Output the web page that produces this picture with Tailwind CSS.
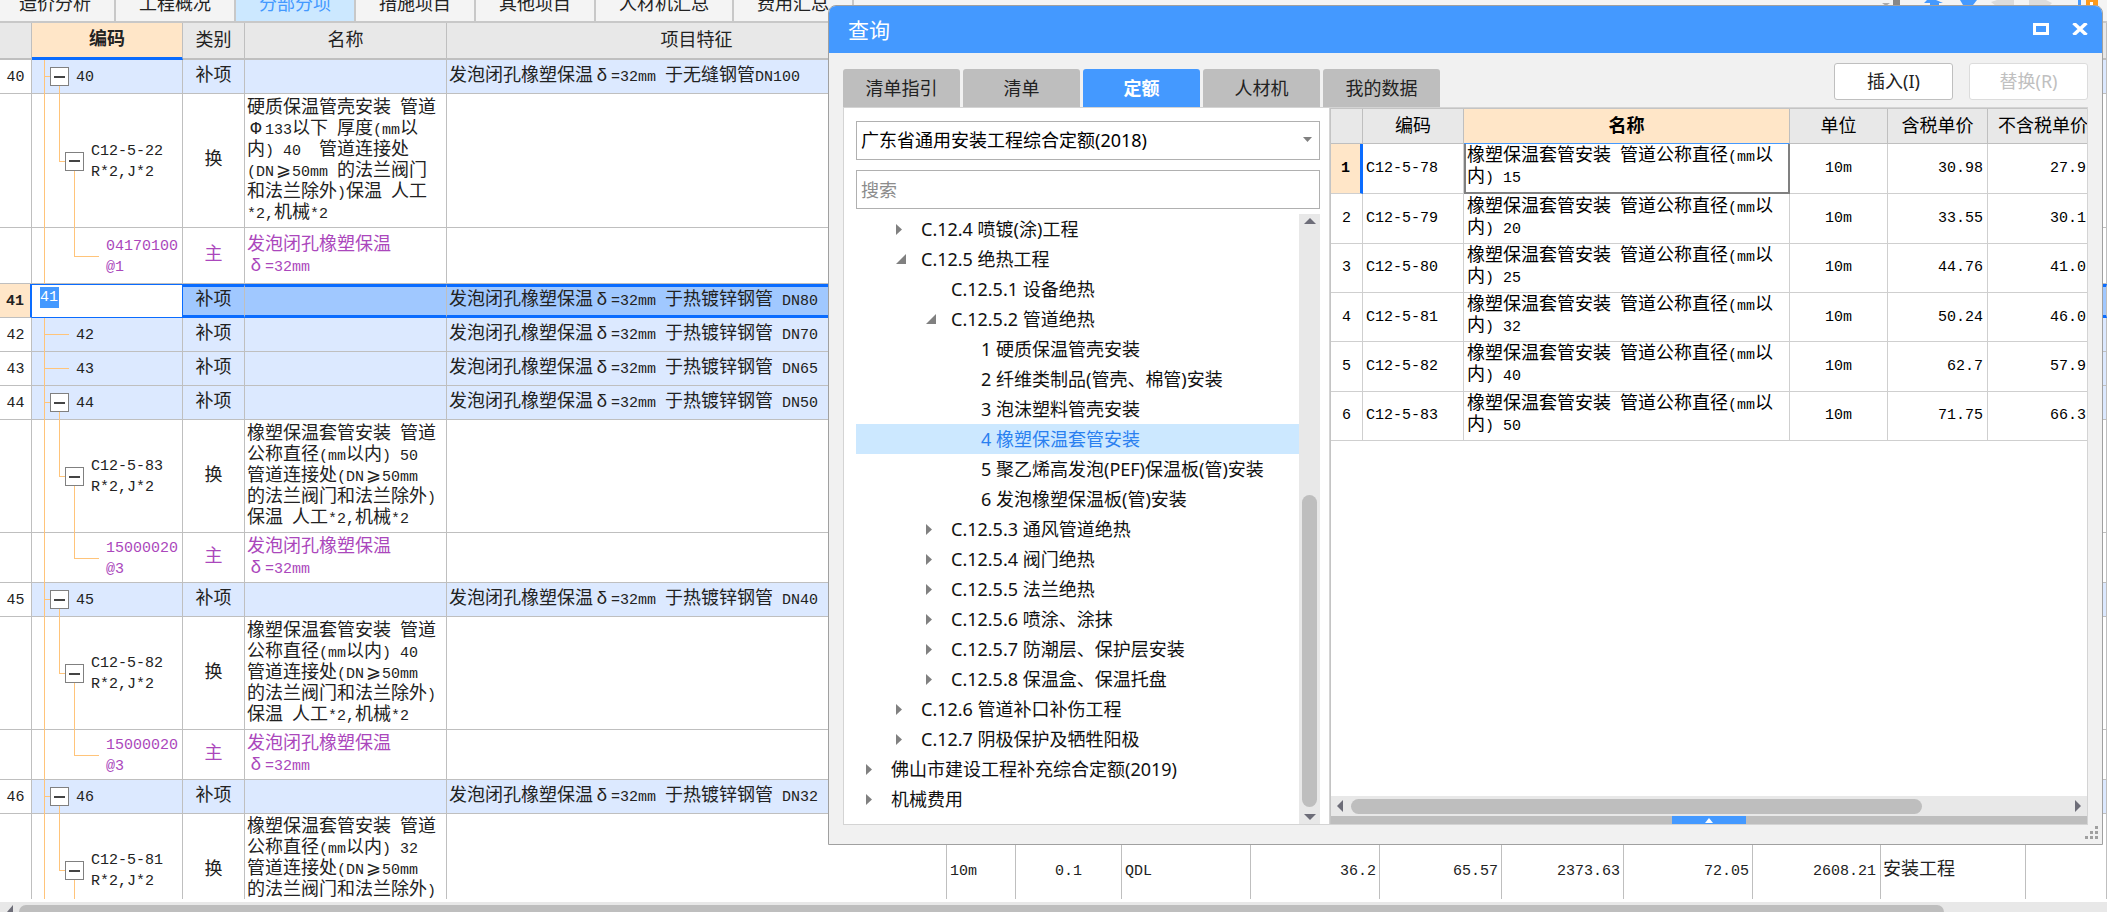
<!DOCTYPE html>
<html lang="zh-CN">
<head>
<meta charset="utf-8">
<title>分部分项</title>
<script src="https://cdn.jsdelivr.net/npm/@tailwindcss/browser@4"></script>
</head>
<body class="relative flex h-screen flex-col overflow-hidden bg-white text-[18px] text-[#222] font-['Noto_Sans','Noto_Sans_CJK_SC',sans-serif]">

<!-- Page tabs and toolbar -->
<header class="flex h-[23px] shrink-0 items-end overflow-hidden border-b-2 border-[#c8c8c8] bg-[#f4f4f4]">
  <nav class="flex [&_button]:h-[35px] [&_button]:w-[120px] [&_button]:shrink-0 [&_button]:border-r-2 [&_button]:border-[#c8c8c8] [&_button]:leading-[35px]">
    <div class="w-[116px] shrink-0 overflow-hidden"><button class="-ml-[4px]">造价分析</button></div>
    <button>工程概况</button>
    <button class="bg-[#cce8ff] text-[#4499ff]">分部分项</button>
    <button>措施项目</button>
    <button>其他项目</button>
    <div class="w-[138px] shrink-0 border-r-2 border-[#c8c8c8] text-center leading-[35px]"><button class="border-none">人材机汇总</button></div>
    <button>费用汇总</button>
  </nav>
  <svg class="mb-[14px] ml-auto mr-[6px] h-[7px] w-[222px] shrink-0" viewBox="0 0 222 7" aria-hidden="true">
    <path d="M3 3h8l-4 3z" fill="#aaa"/><path d="M14 0h7v7h-7z" fill="#888"/>
    <path d="M48 0h9l7 3h-4v4h-9V3h-6z" fill="#4499ff"/><path d="M81 0h17l-4 5-4 2h-2l-4-2z" fill="#4499ff"/>
    <path d="M112 2l6-2h17v6h-18z" fill="#dcdcdc"/><path d="M150 0h17l6 3-3 3h-20z" fill="#dcdcdc"/>
    <path d="M199 0h3v7h-3z" fill="#4499ff"/><path d="M207 0h12v7h-12z" fill="#ff9a1a"/><path d="M211 2h3v3h-3z" fill="#fff"/>
  </svg>
</header>

<!-- Bill of quantities -->
<main class="min-h-0 flex-1 overflow-hidden border-b-3 border-white">
<table class="w-full table-fixed border-separate border-spacing-0 whitespace-pre font-['Liberation_Mono','Noto_Sans_CJK_SC',monospace] text-[15px] leading-[21px]
  [&_td]:relative [&_td]:border-b [&_td]:border-r [&_td]:border-[#bfbfbf] [&_td]:p-0 [&_td]:pt-[2px]
  [&_th]:h-[37px] [&_th]:border-b-2 [&_th]:border-r [&_th]:border-[#bfbfbf] [&_th]:bg-[#e8e8e8] [&_th]:p-0 [&_th]:pt-[3px] [&_th]:font-normal
  [&_span]:text-[18px] [&_span]:leading-none
  [&_i]:absolute [&_i]:bg-[#ffc47a]
  [&_button]:absolute [&_button]:flex [&_button]:size-[19px] [&_button]:items-center [&_button]:justify-center [&_button]:border [&_button]:border-[#808080] [&_button]:bg-white">
  <colgroup><col class="w-[32px]"><col class="w-[151px]"><col class="w-[62px]"><col class="w-[202px]"><col class="w-[500px]"><col class="w-[69px]"><col class="w-[106px]"><col class="w-[129px]"><col class="w-[129px]"><col class="w-[122px]"><col class="w-[122px]"><col class="w-[129px]"><col class="w-[128px]"><col class="w-[145px]"><col></colgroup>
  <thead>
    <tr><th></th><th class="border-b-3! border-b-[#0a6cff]! bg-[#ffe6c8]! font-bold!"><span>编码</span></th><th><span>类别</span></th><th><span>名称</span></th><th><span>项目特征</span></th><th></th><th></th><th></th><th></th><th></th><th></th><th></th><th></th><th></th><th></th></tr>
  </thead>
  <tbody>
    <tr class="h-[34px] bg-[#dce9ff]">
      <td class="bg-white text-center">40</td>
      <td class="pl-[44px]!"><i class="left-[12px] top-0 -bottom-px w-px"></i><i class="left-[12px] top-[16px] h-px w-[6px]"></i><i class="left-[27px] top-[16px] -bottom-px w-px"></i><button class="left-[18px] top-[7px]" aria-label="折叠 40"><svg width="11" height="2"><path d="M0 0h11v2H0z" fill="#444"/></svg></button>40</td>
      <td class="text-center"><span>补项</span></td><td></td>
      <td class="pl-[2px]!"><span>发泡闭孔橡塑保温</span><span class="inline-block w-[18px] text-center">δ</span>=32mm <span>于无缝钢管</span>DN100</td>
      <td colspan="10"></td>
    </tr>
    <tr class="h-[134px]">
      <td></td>
      <td class="pl-[59px]!"><i class="left-[12px] top-0 -bottom-px w-px"></i><i class="left-[27px] top-0 h-1/2 w-px"></i><i class="left-[27px] top-1/2 h-px w-[6px]"></i><i class="left-[42px] top-1/2 -bottom-px w-px"></i><button class="left-[33px] top-[calc(50%-9px)]" aria-label="折叠 C12-5-22"><svg width="11" height="2"><path d="M0 0h11v2H0z" fill="#444"/></svg></button>C12-5-22<br>R*2,J*2</td>
      <td class="text-center"><span>换</span></td>
      <td class="pl-[2px]!"><span>硬质保温管壳安装</span> <span>管道</span><br><span class="inline-block w-[18px] text-center">Φ</span>133<span>以下</span> <span>厚度</span>(mm<span>以</span><br><span>内</span>) 40  <span>管道连接处</span><br>(DN<span class="inline-block w-[18px] text-center">⩾</span>50mm <span>的法兰阀门</span><br><span>和法兰除外</span>)<span>保温</span> <span>人工</span><br>*2,<span>机械</span>*2</td>
      <td></td><td colspan="10"></td>
    </tr>
    <tr class="h-[56px] text-[#ab47bc]">
      <td></td>
      <td class="pl-[74px]!"><i class="left-[12px] top-0 -bottom-px w-px"></i><i class="left-[42px] top-0 h-1/2 w-px"></i><i class="left-[42px] top-1/2 h-px w-[25px]"></i>04170100<br>@1</td>
      <td class="text-center"><span>主</span></td>
      <td class="pl-[2px]!"><span>发泡闭孔橡塑保温</span><br><span class="inline-block w-[18px] text-center">δ</span>=32mm</td>
      <td></td><td colspan="10"></td>
    </tr>
    <tr class="h-[34px] bg-[#a0c8ff]">
      <td class="border-r-2! border-r-[#0a6cff]! bg-[#ffe6c8] text-center font-bold">41</td>
      <td class="border-t! border-[#0a6cff]! bg-white pl-[8px]! align-top"><input aria-label="编码" value="41" class="block h-[21px] w-[19px] bg-[#4499ff] text-white outline-none"></td>
      <td class="border-y-3! border-y-[#0a6cff]! pt-0! text-center"><span>补项</span></td><td class="border-y-3! border-y-[#0a6cff]!"></td>
      <td class="border-y-3! border-y-[#0a6cff]! pt-0! pl-[2px]!"><span>发泡闭孔橡塑保温</span><span class="inline-block w-[18px] text-center">δ</span>=32mm <span>于热镀锌钢管</span> DN80</td>
      <td colspan="10" class="border-y-3! border-y-[#0a6cff]!"></td>
    </tr>
    <tr class="h-[34px] bg-[#dce9ff]">
      <td class="bg-white text-center">42</td>
      <td class="pl-[44px]!"><i class="left-[12px] top-0 -bottom-px w-px"></i><i class="left-[12px] top-[16px] h-px w-[25px]"></i>42</td>
      <td class="text-center"><span>补项</span></td><td></td>
      <td class="pl-[2px]!"><span>发泡闭孔橡塑保温</span><span class="inline-block w-[18px] text-center">δ</span>=32mm <span>于热镀锌钢管</span> DN70</td>
      <td colspan="10"></td>
    </tr>
    <tr class="h-[34px] bg-[#dce9ff]">
      <td class="bg-white text-center">43</td>
      <td class="pl-[44px]!"><i class="left-[12px] top-0 -bottom-px w-px"></i><i class="left-[12px] top-[16px] h-px w-[25px]"></i>43</td>
      <td class="text-center"><span>补项</span></td><td></td>
      <td class="pl-[2px]!"><span>发泡闭孔橡塑保温</span><span class="inline-block w-[18px] text-center">δ</span>=32mm <span>于热镀锌钢管</span> DN65</td>
      <td colspan="10"></td>
    </tr>
    <tr class="h-[34px] bg-[#dce9ff]">
      <td class="bg-white text-center">44</td>
      <td class="pl-[44px]!"><i class="left-[12px] top-0 -bottom-px w-px"></i><i class="left-[12px] top-[16px] h-px w-[6px]"></i><i class="left-[27px] top-[16px] -bottom-px w-px"></i><button class="left-[18px] top-[7px]" aria-label="折叠 44"><svg width="11" height="2"><path d="M0 0h11v2H0z" fill="#444"/></svg></button>44</td>
      <td class="text-center"><span>补项</span></td><td></td>
      <td class="pl-[2px]!"><span>发泡闭孔橡塑保温</span><span class="inline-block w-[18px] text-center">δ</span>=32mm <span>于热镀锌钢管</span> DN50</td>
      <td colspan="10"></td>
    </tr>
    <tr class="h-[113px]">
      <td></td>
      <td class="pl-[59px]!"><i class="left-[12px] top-0 -bottom-px w-px"></i><i class="left-[27px] top-0 h-1/2 w-px"></i><i class="left-[27px] top-1/2 h-px w-[6px]"></i><i class="left-[42px] top-1/2 -bottom-px w-px"></i><button class="left-[33px] top-[calc(50%-9px)]" aria-label="折叠 C12-5-83"><svg width="11" height="2"><path d="M0 0h11v2H0z" fill="#444"/></svg></button>C12-5-83<br>R*2,J*2</td>
      <td class="text-center"><span>换</span></td>
      <td class="pl-[2px]!"><span>橡塑保温套管安装</span> <span>管道</span><br><span>公称直径</span>(mm<span>以内</span>) 50<br><span>管道连接处</span>(DN<span class="inline-block w-[18px] text-center">⩾</span>50mm<br><span>的法兰阀门和法兰除外</span>)<br><span>保温</span> <span>人工</span>*2,<span>机械</span>*2</td>
      <td></td><td colspan="10"></td>
    </tr>
    <tr class="h-[50px] text-[#ab47bc]">
      <td></td>
      <td class="pl-[74px]!"><i class="left-[12px] top-0 -bottom-px w-px"></i><i class="left-[42px] top-0 h-1/2 w-px"></i><i class="left-[42px] top-1/2 h-px w-[25px]"></i>15000020<br>@3</td>
      <td class="text-center"><span>主</span></td>
      <td class="pl-[2px]!"><span>发泡闭孔橡塑保温</span><br><span class="inline-block w-[18px] text-center">δ</span>=32mm</td>
      <td></td><td colspan="10"></td>
    </tr>
    <tr class="h-[34px] bg-[#dce9ff]">
      <td class="bg-white text-center">45</td>
      <td class="pl-[44px]!"><i class="left-[12px] top-0 -bottom-px w-px"></i><i class="left-[12px] top-[16px] h-px w-[6px]"></i><i class="left-[27px] top-[16px] -bottom-px w-px"></i><button class="left-[18px] top-[7px]" aria-label="折叠 45"><svg width="11" height="2"><path d="M0 0h11v2H0z" fill="#444"/></svg></button>45</td>
      <td class="text-center"><span>补项</span></td><td></td>
      <td class="pl-[2px]!"><span>发泡闭孔橡塑保温</span><span class="inline-block w-[18px] text-center">δ</span>=32mm <span>于热镀锌钢管</span> DN40</td>
      <td colspan="10"></td>
    </tr>
    <tr class="h-[113px]">
      <td></td>
      <td class="pl-[59px]!"><i class="left-[12px] top-0 -bottom-px w-px"></i><i class="left-[27px] top-0 h-1/2 w-px"></i><i class="left-[27px] top-1/2 h-px w-[6px]"></i><i class="left-[42px] top-1/2 -bottom-px w-px"></i><button class="left-[33px] top-[calc(50%-9px)]" aria-label="折叠 C12-5-82"><svg width="11" height="2"><path d="M0 0h11v2H0z" fill="#444"/></svg></button>C12-5-82<br>R*2,J*2</td>
      <td class="text-center"><span>换</span></td>
      <td class="pl-[2px]!"><span>橡塑保温套管安装</span> <span>管道</span><br><span>公称直径</span>(mm<span>以内</span>) 40<br><span>管道连接处</span>(DN<span class="inline-block w-[18px] text-center">⩾</span>50mm<br><span>的法兰阀门和法兰除外</span>)<br><span>保温</span> <span>人工</span>*2,<span>机械</span>*2</td>
      <td></td><td colspan="10"></td>
    </tr>
    <tr class="h-[50px] text-[#ab47bc]">
      <td></td>
      <td class="pl-[74px]!"><i class="left-[12px] top-0 -bottom-px w-px"></i><i class="left-[42px] top-0 h-1/2 w-px"></i><i class="left-[42px] top-1/2 h-px w-[25px]"></i>15000020<br>@3</td>
      <td class="text-center"><span>主</span></td>
      <td class="pl-[2px]!"><span>发泡闭孔橡塑保温</span><br><span class="inline-block w-[18px] text-center">δ</span>=32mm</td>
      <td></td><td colspan="10"></td>
    </tr>
    <tr class="h-[34px] bg-[#dce9ff]">
      <td class="bg-white text-center">46</td>
      <td class="pl-[44px]!"><i class="left-[12px] top-0 -bottom-px w-px"></i><i class="left-[12px] top-[16px] h-px w-[6px]"></i><i class="left-[27px] top-[16px] -bottom-px w-px"></i><button class="left-[18px] top-[7px]" aria-label="折叠 46"><svg width="11" height="2"><path d="M0 0h11v2H0z" fill="#444"/></svg></button>46</td>
      <td class="text-center"><span>补项</span></td><td></td>
      <td class="pl-[2px]!"><span>发泡闭孔橡塑保温</span><span class="inline-block w-[18px] text-center">δ</span>=32mm <span>于热镀锌钢管</span> DN32</td>
      <td colspan="10"></td>
    </tr>
    <tr class="h-[113px]">
      <td></td>
      <td class="pl-[59px]!"><i class="left-[12px] top-0 -bottom-px w-px"></i><i class="left-[27px] top-0 h-1/2 w-px"></i><i class="left-[27px] top-1/2 h-px w-[6px]"></i><i class="left-[42px] top-1/2 -bottom-px w-px"></i><button class="left-[33px] top-[calc(50%-9px)]" aria-label="折叠 C12-5-81"><svg width="11" height="2"><path d="M0 0h11v2H0z" fill="#444"/></svg></button>C12-5-81<br>R*2,J*2</td>
      <td class="text-center"><span>换</span></td>
      <td class="pt-[4px]! pl-[2px]! align-top"><span>橡塑保温套管安装</span> <span>管道</span><br><span>公称直径</span>(mm<span>以内</span>) 32<br><span>管道连接处</span>(DN<span class="inline-block w-[18px] text-center">⩾</span>50mm<br><span>的法兰阀门和法兰除外</span>)</td>
      <td></td>
      <td class="pl-[3px]!">10m</td><td class="text-center">0.1</td><td class="pl-[3px]!">QDL</td><td class="pr-[3px]! text-right">36.2</td><td class="pr-[3px]! text-right">65.57</td><td class="pr-[3px]! text-right">2373.63</td><td class="pr-[3px]! text-right">72.05</td><td class="pr-[4px]! text-right">2608.21</td><td class="pl-[2px]!"><span>安装工程</span></td><td></td>
    </tr>
  </tbody>
</table>
</main>
<footer class="flex h-[10px] shrink-0 items-end bg-[#e8e8e8]">
  <svg class="ml-[7px] mr-[6px] shrink-0" width="6" height="7" aria-hidden="true"><path d="M6 0v7H0z" fill="#6d6d78"/></svg>
  <div class="h-[7px] flex-1 rounded-t-[7px] bg-[#bebebe]"></div>
  <div class="w-[163px] shrink-0"></div>
</footer>

<!-- Query window -->
<section role="dialog" aria-labelledby="dlg" class="absolute bottom-[67px] left-[828px] right-[4px] top-[5px] flex flex-col rounded-t-[8px] border border-[#a0a0a0] bg-[#f1f1f1]">
  <header class="flex h-[47px] shrink-0 items-center rounded-t-[7px] bg-[#4499ff] pl-[19px] pr-[14px] text-white">
    <h1 id="dlg" class="flex-1 pt-[3px] text-[21px]">查询</h1>
    <button aria-label="最大化" class="mr-[23px] mb-[2px]"><svg width="16" height="12"><path d="M0 0h16v12H0zM3 3v6h10V3z" fill="#fff" fill-rule="evenodd"/></svg></button>
    <button aria-label="关闭" class="mb-[2px]"><svg width="16" height="12"><path d="M1.500 0L14.500 12M14.500 0L1.500 12" stroke="#fff" stroke-width="3.500"/></svg></button>
  </header>

  <div class="flex min-h-0 flex-1 flex-col pl-[14px] pr-[14px]">
    <div class="flex h-[54px] shrink-0 items-end">
      <div role="tablist" class="flex flex-1 gap-[3px] [&_button]:h-[38px] [&_button]:w-[117px] [&_button]:rounded-t-[3px] [&_button]:bg-[#bebebe]">
        <button role="tab">清单指引</button>
        <button role="tab">清单</button>
        <button role="tab" aria-selected="true" class="bg-[#4499ff]! font-bold text-white">定额</button>
        <button role="tab">人材机</button>
        <button role="tab">我的数据</button>
      </div>
      <div class="mb-[7px] flex gap-[16px]">
        <button class="h-[37px] w-[119px] rounded-[3px] border border-[#bfbfbf] bg-white">插入(I)</button>
        <button disabled class="h-[37px] w-[119px] rounded-[3px] border border-[#dcdcdc] bg-white text-[#c0c0c0]">替换(R)</button>
      </div>
    </div>

    <div class="flex min-h-0 flex-1 border border-[#d4d4d4] bg-white">
      <!-- Quota library and chapter tree -->
      <div class="flex w-[486px] shrink-0 flex-col border-r border-[#d4d4d4] pl-[12px] pr-[9px] pt-[13px]">
        <div class="relative">
          <select aria-label="定额库" class="h-[39px] w-full appearance-none border border-[#b0b0b0] bg-white pl-[4px] text-black"><option>广东省通用安装工程综合定额(2018)</option></select>
          <svg class="absolute right-[8px] top-[16px]" width="9" height="5" aria-hidden="true"><path d="M0 0h9L4.500 5z" fill="#808080"/></svg>
        </div>
        <input aria-label="搜索" placeholder="搜索" class="mt-[10px] h-[39px] w-full border border-[#b0b0b0] pl-[4px] outline-none placeholder:text-[#8c8c8c]">
        <div class="mt-[5px] flex min-h-0 flex-1">
          <ul role="tree" class="flex-1 overflow-hidden whitespace-nowrap text-[#111] [&_li]:flex [&_li]:h-[30px] [&_li]:items-center [&_svg]:mr-[19px] [&_svg]:shrink-0 [&_svg]:fill-[#808080]">
            <li role="treeitem" class="pl-[40px]"><svg width="6" height="11"><path d="M0 0l6 5.500L0 11z"/></svg>C.12.4 喷镀(涂)工程</li>
            <li role="treeitem" class="pl-[40px]"><svg class="mr-[15px]!" width="10" height="10"><path d="M10 0v10H0z"/></svg>C.12.5 绝热工程</li>
            <li role="treeitem" class="pl-[95px]">C.12.5.1 设备绝热</li>
            <li role="treeitem" class="pl-[70px]"><svg class="mr-[15px]!" width="10" height="10"><path d="M10 0v10H0z"/></svg>C.12.5.2 管道绝热</li>
            <li role="treeitem" class="pl-[125px]">1 硬质保温管壳安装</li>
            <li role="treeitem" class="pl-[125px]">2 纤维类制品(管壳、棉管)安装</li>
            <li role="treeitem" class="pl-[125px]">3 泡沫塑料管壳安装</li>
            <li role="treeitem" aria-selected="true" class="bg-[#cce8ff] pl-[125px] text-[#2a80f0]">4 橡塑保温套管安装</li>
            <li role="treeitem" class="pl-[125px]">5 聚乙烯高发泡(PEF)保温板(管)安装</li>
            <li role="treeitem" class="pl-[125px]">6 发泡橡塑保温板(管)安装</li>
            <li role="treeitem" class="pl-[70px]"><svg width="6" height="11"><path d="M0 0l6 5.500L0 11z"/></svg>C.12.5.3 通风管道绝热</li>
            <li role="treeitem" class="pl-[70px]"><svg width="6" height="11"><path d="M0 0l6 5.500L0 11z"/></svg>C.12.5.4 阀门绝热</li>
            <li role="treeitem" class="pl-[70px]"><svg width="6" height="11"><path d="M0 0l6 5.500L0 11z"/></svg>C.12.5.5 法兰绝热</li>
            <li role="treeitem" class="pl-[70px]"><svg width="6" height="11"><path d="M0 0l6 5.500L0 11z"/></svg>C.12.5.6 喷涂、涂抹</li>
            <li role="treeitem" class="pl-[70px]"><svg width="6" height="11"><path d="M0 0l6 5.500L0 11z"/></svg>C.12.5.7 防潮层、保护层安装</li>
            <li role="treeitem" class="pl-[70px]"><svg width="6" height="11"><path d="M0 0l6 5.500L0 11z"/></svg>C.12.5.8 保温盒、保温托盘</li>
            <li role="treeitem" class="pl-[40px]"><svg width="6" height="11"><path d="M0 0l6 5.500L0 11z"/></svg>C.12.6 管道补口补伤工程</li>
            <li role="treeitem" class="pl-[40px]"><svg width="6" height="11"><path d="M0 0l6 5.500L0 11z"/></svg>C.12.7 阴极保护及牺牲阳极</li>
            <li role="treeitem" class="pl-[10px]"><svg width="6" height="11"><path d="M0 0l6 5.500L0 11z"/></svg>佛山市建设工程补充综合定额(2019)</li>
            <li role="treeitem" class="pl-[10px]"><svg width="6" height="11"><path d="M0 0l6 5.500L0 11z"/></svg>机械费用</li>
          </ul>
          <div class="flex w-[21px] shrink-0 flex-col items-center bg-[#e8e8e8] py-[4px]">
            <svg width="12" height="6" aria-hidden="true"><path d="M0 6h12L6 0z" fill="#6d6d78"/></svg>
            <div class="flex-1"></div>
            <div class="mb-[7px] h-[312px] w-[15px] rounded-full bg-[#bebebe]"></div>
            <svg width="12" height="6" aria-hidden="true"><path d="M0 0h12L6 6z" fill="#6d6d78"/></svg>
          </div>
        </div>
      </div>

      <!-- Quota items -->
      <div class="flex min-w-0 flex-1 flex-col border-l border-t border-[#c4c4c4]">
        <div class="min-h-0 flex-1 overflow-hidden">
          <table class="h-[332px] w-[calc(100%+12px)] table-fixed border-separate border-spacing-0 whitespace-pre text-[15px] leading-[21px] text-black font-['Liberation_Mono','Noto_Sans_CJK_SC',monospace]
            [&_td]:border-b [&_td]:border-r [&_td]:border-[#cfcfcf] [&_td]:p-0
            [&_th]:h-[35px] [&_th]:border-b [&_th]:border-r [&_th]:border-[#bfbfbf] [&_th]:bg-[#e8e8e8] [&_th]:p-0 [&_th]:pt-[4px] [&_th]:font-normal
            [&_span]:text-[18px] [&_span]:leading-none">
            <colgroup><col class="w-[32px]"><col class="w-[101px]"><col><col class="w-[98px]"><col class="w-[100px]"><col class="w-[111px]"></colgroup>
            <thead><tr><th></th><th><span>编码</span></th><th class="border-b-[#4499ff]! bg-[#ffe6c8]! font-bold!"><span>名称</span></th><th><span>单位</span></th><th><span>含税单价</span></th><th><span>不含税单价</span></th></tr></thead>
            <tbody>
              <tr><td class="border-r-3! border-r-[#0a6cff]! bg-[#ffe6c8] text-center font-bold">1</td><td class="pl-[3px]!">C12-5-78</td><td class="border-2! border-t-0! border-[#808080]! pl-[1px]!"><span>橡塑保温套管安装</span> <span>管道公称直径</span>(mm<span>以</span><br><span>内</span>) 15</td><td class="text-center">10m</td><td class="pr-[4px]! text-right">30.98</td><td class="pr-[12px]! text-right">27.9</td></tr>
              <tr><td class="text-center">2</td><td class="pl-[3px]!">C12-5-79</td><td class="pl-[3px]!"><span>橡塑保温套管安装</span> <span>管道公称直径</span>(mm<span>以</span><br><span>内</span>) 20</td><td class="text-center">10m</td><td class="pr-[4px]! text-right">33.55</td><td class="pr-[12px]! text-right">30.1</td></tr>
              <tr><td class="text-center">3</td><td class="pl-[3px]!">C12-5-80</td><td class="pl-[3px]!"><span>橡塑保温套管安装</span> <span>管道公称直径</span>(mm<span>以</span><br><span>内</span>) 25</td><td class="text-center">10m</td><td class="pr-[4px]! text-right">44.76</td><td class="pr-[12px]! text-right">41.0</td></tr>
              <tr><td class="text-center">4</td><td class="pl-[3px]!">C12-5-81</td><td class="pl-[3px]!"><span>橡塑保温套管安装</span> <span>管道公称直径</span>(mm<span>以</span><br><span>内</span>) 32</td><td class="text-center">10m</td><td class="pr-[4px]! text-right">50.24</td><td class="pr-[12px]! text-right">46.0</td></tr>
              <tr><td class="text-center">5</td><td class="pl-[3px]!">C12-5-82</td><td class="pl-[3px]!"><span>橡塑保温套管安装</span> <span>管道公称直径</span>(mm<span>以</span><br><span>内</span>) 40</td><td class="text-center">10m</td><td class="pr-[4px]! text-right">62.7</td><td class="pr-[12px]! text-right">57.9</td></tr>
              <tr><td class="text-center">6</td><td class="pl-[3px]!">C12-5-83</td><td class="pl-[3px]!"><span>橡塑保温套管安装</span> <span>管道公称直径</span>(mm<span>以</span><br><span>内</span>) 50</td><td class="text-center">10m</td><td class="pr-[4px]! text-right">71.75</td><td class="pr-[12px]! text-right">66.3</td></tr>
            </tbody>
          </table>
        </div>
        <div class="flex h-[20px] shrink-0 items-center bg-[#e8e8e8] px-[6px]">
          <svg width="6" height="12" aria-hidden="true"><path d="M6 0v12L0 6z" fill="#6d6d78"/></svg>
          <div class="ml-[8px] mr-[153px] h-[15px] flex-1 rounded-full bg-[#bebebe]"></div>
          <svg width="6" height="12" aria-hidden="true"><path d="M0 0v12l6-6z" fill="#6d6d78"/></svg>
        </div>
        <div class="flex h-[8px] shrink-0 justify-center bg-[#bebebe]">
          <button aria-label="展开" class="flex w-[74px] items-center justify-center bg-[#4499ff]"><svg width="8" height="5"><path d="M0 5h8L4 0z" fill="#fff"/></svg></button>
        </div>
      </div>
    </div>

    <div class="-mr-[10px] flex h-[19px] shrink-0 justify-end pt-[1px]">
      <svg width="13" height="13" fill="#a0a0a0" aria-hidden="true"><path d="M10 0h3v3h-3zM5 5h3v3H5zM10 5h3v3h-3zM0 10h3v3H0zM5 10h3v3H5zM10 10h3v3h-3z"/></svg>
    </div>
  </div>
</section>
</body>
</html>
